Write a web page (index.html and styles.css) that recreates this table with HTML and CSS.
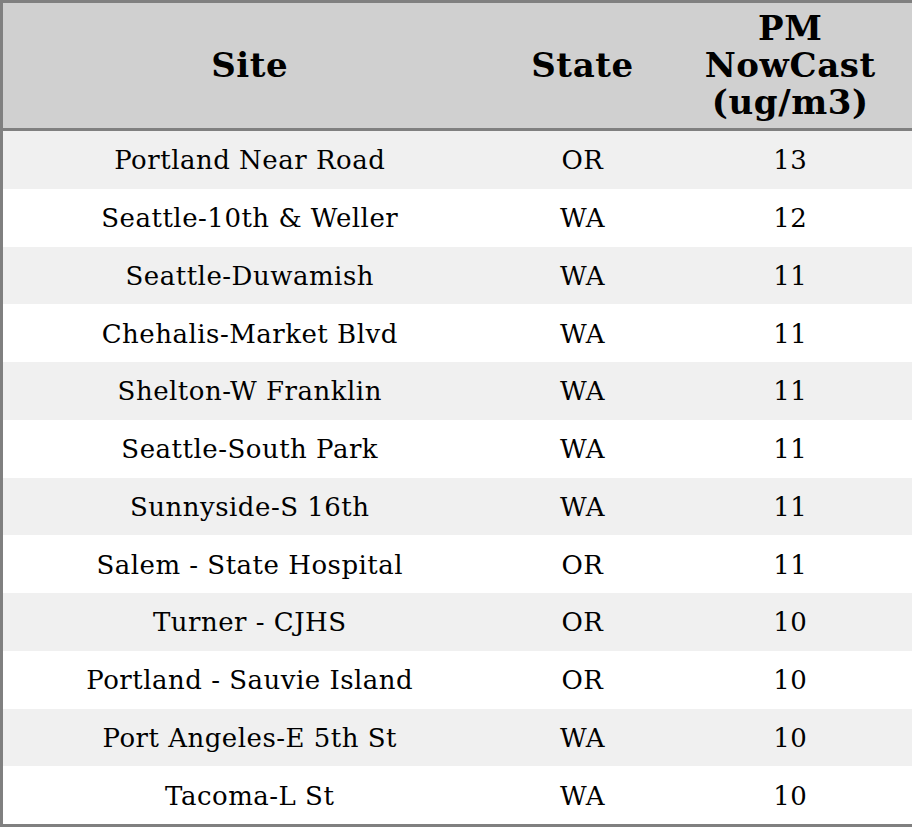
FILE: index.html
```html
<!DOCTYPE html>
<html>
<head>
<meta charset="utf-8">
<link rel="stylesheet" href="styles.css">
</head>
<body>
<table class="aq">
  <colgroup>
    <col class="c-site">
    <col class="c-state">
    <col class="c-pm">
  </colgroup>
  <thead>
    <tr><th>Site</th><th>State</th><th>PM<br>NowCast<br>(ug/m3)</th></tr>
  </thead>
  <tbody>
    <tr><td>Portland Near Road</td><td>OR</td><td>13</td></tr>
    <tr><td>Seattle-10th &amp; Weller</td><td>WA</td><td>12</td></tr>
    <tr><td>Seattle-Duwamish</td><td>WA</td><td>11</td></tr>
    <tr><td>Chehalis-Market Blvd</td><td>WA</td><td>11</td></tr>
    <tr><td>Shelton-W Franklin</td><td>WA</td><td>11</td></tr>
    <tr><td>Seattle-South Park</td><td>WA</td><td>11</td></tr>
    <tr><td>Sunnyside-S 16th</td><td>WA</td><td>11</td></tr>
    <tr><td>Salem - State Hospital</td><td>OR</td><td>11</td></tr>
    <tr><td>Turner - CJHS</td><td>OR</td><td>10</td></tr>
    <tr><td>Portland - Sauvie Island</td><td>OR</td><td>10</td></tr>
    <tr><td>Port Angeles-E 5th St</td><td>WA</td><td>10</td></tr>
    <tr><td>Tacoma-L St</td><td>WA</td><td>10</td></tr>
  </tbody>
</table>
</body>
</html>
```
FILE: styles.css
```css
html, body {
  margin: 0;
  padding: 0;
  background: #ffffff;
}
.aq {
  width: 912px;
  border-collapse: collapse;
  border: 3px solid #808080;
  font-family: "DejaVu Serif", serif;
  color: #000;
  table-layout: fixed;
}
.c-site { width: 495px; }
.c-state { width: 172px; }
.c-pm { width: 245px; }
.aq th {
  background: #d0d0d0;
  font-weight: bold;
  font-size: 34px;
  letter-spacing: 0.6px;
  line-height: 37px;
  height: 125px;
  padding: 0;
  text-align: center;
  vertical-align: middle;
  border-bottom: 3px solid #808080;
}
.aq td {
  font-size: 26px;
  letter-spacing: 0.5px;
  height: 56.75px;
  padding: 1px 0 0 0;
  text-align: center;
  vertical-align: middle;
}
.aq tbody tr:nth-child(odd) td {
  background: #f0f0f0;
}
```
